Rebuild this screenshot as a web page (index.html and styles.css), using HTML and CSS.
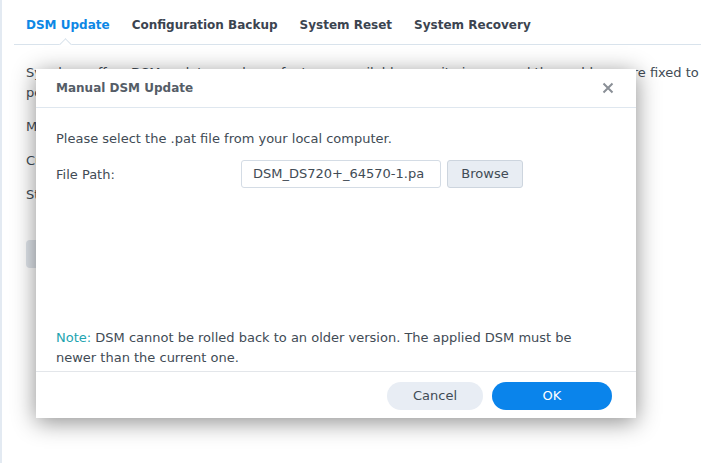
FILE: index.html
```html
<!DOCTYPE html>
<html>
<head>
<meta charset="utf-8">
<link rel="stylesheet" href="styles.css">
</head>
<body>
<div class="page">
  <nav class="tabs">
    <span class="tab active">DSM Update</span>
    <span class="tab">Configuration Backup</span>
    <span class="tab">System Reset</span>
    <span class="tab">System Recovery</span>
  </nav>
  <div class="content">
    <p class="intro"><span class="line">Synology offers DSM updates and new features, available security issues and the problems are fixed to</span><span class="line">perform better and more reliably.</span></p>
    <p class="row">Model name: DS720+</p>
    <p class="row">Current DSM version: DSM 7.0-41890</p>
    <p class="row">Status: Your DSM version is up-to-date.</p>
    <button class="bgbtn">Check for Updates</button>
  </div>
</div>

<div class="dialog">
  <div class="dlg-head">
    <span class="dlg-title">Manual DSM Update</span>
    <span class="close">
      <svg width="12" height="12" viewBox="0 0 12 12"><path d="M1.5 1.5 L10.5 10.5 M10.5 1.5 L1.5 10.5" stroke="#8a8f96" stroke-width="2" stroke-linecap="butt"/></svg>
    </span>
  </div>
  <div class="dlg-body">
    <p class="lead">Please select the .pat file from your local computer.</p>
    <div class="field">
      <span class="label">File Path:</span>
      <div class="input"><span class="input-text">DSM_DS720+_64570-1.pat</span></div>
      <span class="browse">Browse</span>
    </div>
    <div class="spacer"></div>
    <p class="note"><span class="note-k">Note:</span> DSM cannot be rolled back to an older version. The applied DSM must be newer than the current one.</p>
  </div>
  <div class="dlg-foot">
    <span class="btn cancel">Cancel</span>
    <span class="btn ok">OK</span>
  </div>
</div>
</body>
</html>
```
FILE: styles.css
```css
* { box-sizing: border-box; }
html, body { margin: 0; padding: 0; }
body {
  width: 701px;
  height: 463px;
  overflow: hidden;
  background: #fff;
  font-family: "DejaVu Sans", Verdana, sans-serif;
  font-size: 13px;
  color: #414b55;
  position: relative;
}
.page {
  height: 463px;
  border-left: 2px solid #e3eaf2;
  padding: 0 0 0 12px;
}
.tabs {
  display: flex;
  gap: 22px;
  padding: 17px 0 0 12px;
  height: 45px;
  border-bottom: 1px solid #d9e3ec;
  position: relative;
}
.tab {
  font-weight: bold;
  color: #3b4450;
  font-size: 12px;
  line-height: 17px;
}
.tab.active { color: #0d87e5; position: relative; }
.tab.active::after {
  content: "";
  position: absolute;
  left: 35px;
  top: 23px;
  width: 8px; height: 8px;
  background: #fff;
  border-left: 1px solid #d9e3ec;
  border-top: 1px solid #d9e3ec;
  transform: rotate(45deg);
}
.content { padding: 18px 0 0 12px; }
.intro { margin: 0; line-height: 20px; }
.line { display: block; white-space: nowrap; }
.row { margin: 14px 0 0; line-height: 20px; }
.bgbtn {
  margin-top: 35px;
  height: 28px;
  border: none;
  border-radius: 4px;
  background: #dfe4ea;
  font: inherit;
  padding: 0 16px;
}
.dialog {
  position: absolute;
  left: 36px;
  top: 69px;
  width: 600px;
  height: 349px;
  background: #fff;
  box-shadow: 0 4px 22px rgba(0,0,0,0.45);
  display: flex;
  flex-direction: column;
}
.dlg-head {
  height: 39px;
  border-bottom: 1px solid #dfe7ef;
  display: flex;
  align-items: center;
  justify-content: space-between;
  padding: 0 22px 0 20px;
}
.dlg-title { font-weight: bold; color: #555d67; font-size: 12px; }
.close { display: flex; }
.dlg-body {
  flex: 1;
  padding: 22px 20px 0 20px;
  display: flex;
  flex-direction: column;
}
.lead { margin: 0; line-height: 18px; }
.field {
  display: flex;
  align-items: center;
  margin-top: 12px;
}
.label { width: 185px; }
.input {
  width: 200px;
  height: 28px;
  border: 1px solid #d4dce5;
  border-radius: 3px;
  padding: 0 0 0 11px;
  line-height: 26px;
  color: #414b55;
}
.input-text {
  display: block;
  width: 171px;
  overflow: hidden;
  white-space: nowrap;
}
.browse {
  margin-left: 6px;
  height: 28px;
  width: 76px;
  background: #e8edf3;
  border: 1px solid #cdd5de;
  border-radius: 3px;
  text-align: center;
  line-height: 26px;
}
.spacer { flex: 1; }
.note { margin: 0 0 3px; line-height: 20px; max-width: 530px; }
.note-k { color: #23a4b0; }
.dlg-foot {
  height: 47px;
  border-top: 1px solid #e3e6ea;
  display: flex;
  justify-content: flex-end;
  align-items: center;
  gap: 9px;
  padding: 1px 24px 0 0;
}
.btn {
  height: 28px;
  border-radius: 14px;
  text-align: center;
  line-height: 28px;
}
.cancel { width: 96px; background: #e8edf4; color: #414b55; }
.ok { width: 120px; background: #0a84eb; color: #fff; }
```
